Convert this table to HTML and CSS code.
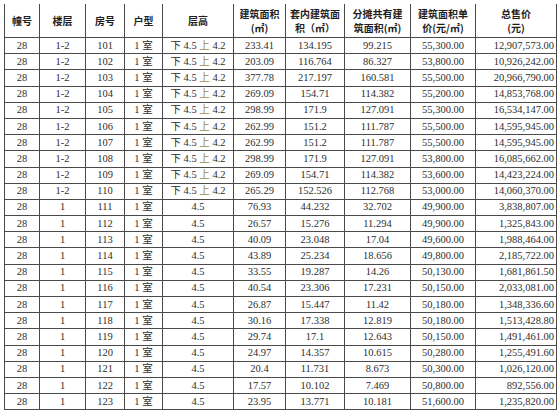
FILE: index.html
```html
<!DOCTYPE html>
<html lang="zh">
<head>
<meta charset="utf-8">
<link rel="stylesheet" href="styles.css">
</head>
<body>
<div class="wrap">
<table class="price-table">
<colgroup>
<col class="c1"><col class="c2"><col class="c3"><col class="c4"><col class="c5"><col class="c6"><col class="c7"><col class="c8"><col class="c9"><col class="c10">
</colgroup>
<thead>
<tr>
<th>幢号</th><th>楼层</th><th>房号</th><th>户型</th><th>层高</th>
<th>建筑面积<br>(㎡)</th>
<th>套内建筑面<br>积（㎡）</th>
<th>分摊共有建<br>筑面积(㎡)</th>
<th>建筑面积单<br>价(元/㎡)</th>
<th>总售价<br>(元)</th>
</tr>
</thead>
<tbody>
<tr><td>28</td><td>1-2</td><td>101</td><td>1 室</td><td>下 4.5 <span class="up">上</span> 4.2</td><td>233.41</td><td>134.195</td><td>99.215</td><td>55,300.00</td><td class="r">12,907,573.00</td></tr>
<tr><td>28</td><td>1-2</td><td>102</td><td>1 室</td><td>下 4.5 <span class="up">上</span> 4.2</td><td>203.09</td><td>116.764</td><td>86.327</td><td>53,800.00</td><td class="r">10,926,242.00</td></tr>
<tr><td>28</td><td>1-2</td><td>103</td><td>1 室</td><td>下 4.5 <span class="up">上</span> 4.2</td><td>377.78</td><td>217.197</td><td>160.581</td><td>55,500.00</td><td class="r">20,966,790.00</td></tr>
<tr><td>28</td><td>1-2</td><td>104</td><td>1 室</td><td>下 4.5 <span class="up">上</span> 4.2</td><td>269.09</td><td>154.71</td><td>114.382</td><td>55,200.00</td><td class="r">14,853,768.00</td></tr>
<tr><td>28</td><td>1-2</td><td>105</td><td>1 室</td><td>下 4.5 <span class="up">上</span> 4.2</td><td>298.99</td><td>171.9</td><td>127.091</td><td>55,300.00</td><td class="r">16,534,147.00</td></tr>
<tr><td>28</td><td>1-2</td><td>106</td><td>1 室</td><td>下 4.5 <span class="up">上</span> 4.2</td><td>262.99</td><td>151.2</td><td>111.787</td><td>55,500.00</td><td class="r">14,595,945.00</td></tr>
<tr><td>28</td><td>1-2</td><td>107</td><td>1 室</td><td>下 4.5 <span class="up">上</span> 4.2</td><td>262.99</td><td>151.2</td><td>111.787</td><td>55,500.00</td><td class="r">14,595,945.00</td></tr>
<tr><td>28</td><td>1-2</td><td>108</td><td>1 室</td><td>下 4.5 <span class="up">上</span> 4.2</td><td>298.99</td><td>171.9</td><td>127.091</td><td>53,800.00</td><td class="r">16,085,662.00</td></tr>
<tr><td>28</td><td>1-2</td><td>109</td><td>1 室</td><td>下 4.5 <span class="up">上</span> 4.2</td><td>269.09</td><td>154.71</td><td>114.382</td><td>53,600.00</td><td class="r">14,423,224.00</td></tr>
<tr><td>28</td><td>1-2</td><td>110</td><td>1 室</td><td>下 4.5 <span class="up">上</span> 4.2</td><td>265.29</td><td>152.526</td><td>112.768</td><td>53,000.00</td><td class="r">14,060,370.00</td></tr>
<tr><td>28</td><td>1</td><td>111</td><td>1 室</td><td>4.5</td><td>76.93</td><td>44.232</td><td>32.702</td><td>49,900.00</td><td class="r">3,838,807.00</td></tr>
<tr><td>28</td><td>1</td><td>112</td><td>1 室</td><td>4.5</td><td>26.57</td><td>15.276</td><td>11.294</td><td>49,900.00</td><td class="r">1,325,843.00</td></tr>
<tr><td>28</td><td>1</td><td>113</td><td>1 室</td><td>4.5</td><td>40.09</td><td>23.048</td><td>17.04</td><td>49,600.00</td><td class="r">1,988,464.00</td></tr>
<tr><td>28</td><td>1</td><td>114</td><td>1 室</td><td>4.5</td><td>43.89</td><td>25.234</td><td>18.656</td><td>49,800.00</td><td class="r">2,185,722.00</td></tr>
<tr><td>28</td><td>1</td><td>115</td><td>1 室</td><td>4.5</td><td>33.55</td><td>19.287</td><td>14.26</td><td>50,130.00</td><td class="r">1,681,861.50</td></tr>
<tr><td>28</td><td>1</td><td>116</td><td>1 室</td><td>4.5</td><td>40.54</td><td>23.306</td><td>17.231</td><td>50,150.00</td><td class="r">2,033,081.00</td></tr>
<tr><td>28</td><td>1</td><td>117</td><td>1 室</td><td>4.5</td><td>26.87</td><td>15.447</td><td>11.42</td><td>50,180.00</td><td class="r">1,348,336.60</td></tr>
<tr><td>28</td><td>1</td><td>118</td><td>1 室</td><td>4.5</td><td>30.16</td><td>17.338</td><td>12.819</td><td>50,180.00</td><td class="r">1,513,428.80</td></tr>
<tr><td>28</td><td>1</td><td>119</td><td>1 室</td><td>4.5</td><td>29.74</td><td>17.1</td><td>12.643</td><td>50,150.00</td><td class="r">1,491,461.00</td></tr>
<tr><td>28</td><td>1</td><td>120</td><td>1 室</td><td>4.5</td><td>24.97</td><td>14.357</td><td>10.615</td><td>50,280.00</td><td class="r">1,255,491.60</td></tr>
<tr><td>28</td><td>1</td><td>121</td><td>1 室</td><td>4.5</td><td>20.4</td><td>11.731</td><td>8.673</td><td>50,300.00</td><td class="r">1,026,120.00</td></tr>
<tr><td>28</td><td>1</td><td>122</td><td>1 室</td><td>4.5</td><td>17.57</td><td>10.102</td><td>7.469</td><td>50,800.00</td><td class="r">892,556.00</td></tr>
<tr><td>28</td><td>1</td><td>123</td><td>1 室</td><td>4.5</td><td>23.95</td><td>13.771</td><td>10.181</td><td>51,600.00</td><td class="r">1,235,820.00</td></tr>
</tbody>
</table>
</div>
</body>
</html>
```
FILE: styles.css
```css
html, body {
  margin: 0;
  padding: 0;
  background: #ffffff;
}

.wrap {
  padding: 4px 0 0 4px;
}

.price-table {
  border-collapse: collapse;
  table-layout: fixed;
  width: 553px;
  font-family: "Liberation Serif", "Noto Sans CJK SC", serif;
  font-size: 10.5px;
  color: #2e2e2e;
}

.c1 { width: 35px; }
.c2 { width: 46px; }
.c3 { width: 39px; }
.c4 { width: 38px; }
.c5 { width: 71px; }
.c6 { width: 52px; }
.c7 { width: 59px; }
.c8 { width: 66px; }
.c9 { width: 65px; }
.c10 { width: 81px; }

.price-table th,
.price-table td {
  border: 1px solid #4a4a4a;
  padding: 0;
  text-align: center;
  vertical-align: middle;
  white-space: nowrap;
  overflow: hidden;
}

.price-table th {
  border-top: none;
  height: 33px;
  font-family: "Noto Sans CJK SC", sans-serif;
  font-weight: 700;
  font-size: 10px;
  line-height: 14px;
  color: #1e1e1e;
}

.price-table td {
  height: 15.2px;
  line-height: 12px;
}

.price-table td.r {
  text-align: right;
  padding-right: 2px;
}

.up {
  color: #9a8a4c;
}
```
